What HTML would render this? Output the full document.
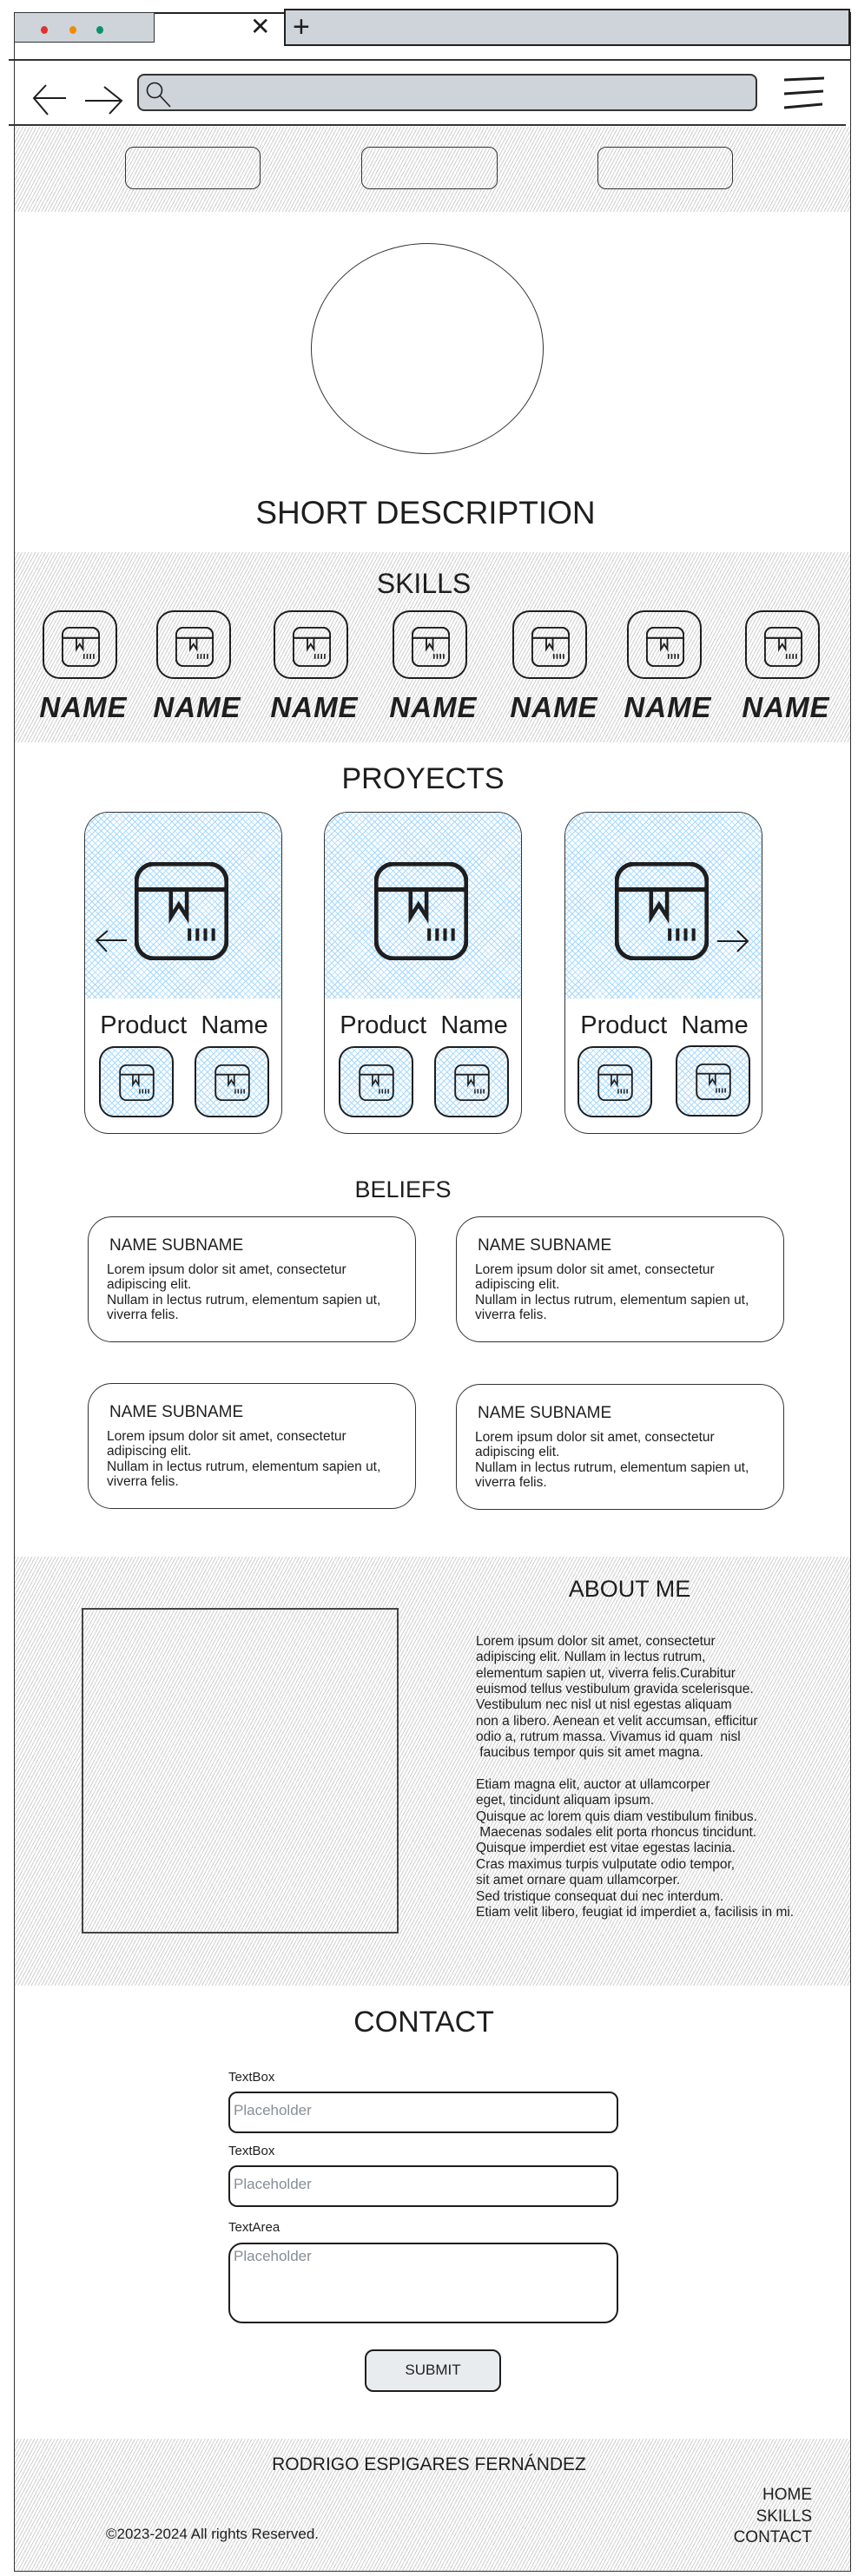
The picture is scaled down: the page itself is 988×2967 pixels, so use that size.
<!DOCTYPE html>
<html><head><meta charset="utf-8"><style>
*{margin:0;padding:0;box-sizing:border-box}
body{width:988px;height:2967px;position:relative;background:#fff;font-family:"Liberation Sans",sans-serif;color:#1e1e1e;overflow:hidden}
.a{position:absolute}
.hatch{background:repeating-linear-gradient(-62deg,#fff 0 2.4px,#cfcfcf 2.4px 3.4px)}
.blue{background:repeating-linear-gradient(45deg,transparent 0 4px,#a5d8ff 4px 5px),repeating-linear-gradient(-45deg,#fff 0 4px,#a5d8ff 4px 5px)}
.hand{font-family:"Liberation Sans Narrow","Liberation Sans",sans-serif;text-align:center;white-space:nowrap}
.skill{width:86px;height:79px;border:2.5px solid #1e1e1e;border-radius:20px}
.skill svg{position:absolute;left:20px;top:17px}
.nm{width:110px;font-size:33px;font-style:italic;font-weight:bold;letter-spacing:1px}
.card{width:228px;height:371px;border:1.5px solid #333;border-radius:28px;overflow:hidden}
.thumb{width:86px;height:82px;border:2.5px solid #1e1e1e;border-radius:18px}
.thumb svg{position:absolute;left:21px;top:19px}
.bel{width:378px;height:145px;border:1.5px solid #333;border-radius:28px}
.bel h3{position:absolute;left:24px;top:22px;font-size:19px;font-weight:normal}
.bel p{position:absolute;left:21px;top:52px;font-size:15.5px;line-height:17.3px}
.inp{left:263px;width:449px;height:48px;border:2.5px solid #1e1e1e;border-radius:10px;font-size:17px;color:#868e96;padding:10px 4px;font-family:"Liberation Sans Narrow","Liberation Sans",sans-serif}
.lbl{left:263px;font-size:15px;font-family:"Liberation Sans Narrow","Liberation Sans",sans-serif}
</style></head><body>
<svg width="0" height="0" style="position:absolute"><defs>
<g id="box"><rect x="2" y="2" width="102" height="107" rx="20" fill="none" stroke="#1e1e1e" stroke-width="5"/><line x1="2" y1="31" x2="104" y2="31" stroke="#1e1e1e" stroke-width="5"/><path d="M41 31V62L50 48L59 62V31" fill="none" stroke="#1e1e1e" stroke-width="4.5"/><path d="M62 75V89M71 75V89M80 75V89M89 75V89" stroke="#1e1e1e" stroke-width="4"/></g>
</defs></svg>

<!-- browser chrome -->
<div class="a" style="left:16px;top:14px;width:964px;height:2948px;border:1.5px solid #333;border-top:2px solid #222"></div>
<div class="a" style="left:16px;top:14px;width:162px;height:35px;background:#ced4da;border:1.5px solid #333"></div>
<div class="a" style="left:47px;top:30px;width:8px;height:9px;border-radius:50%;background:#e03131"></div>
<div class="a" style="left:80px;top:30px;width:8px;height:9px;border-radius:50%;background:#f08c00"></div>
<div class="a" style="left:111px;top:30px;width:8px;height:9px;border-radius:50%;background:#099268"></div>
<div class="a" style="left:288px;top:14px;font-size:28px;line-height:34px">✕</div>
<div class="a" style="left:327px;top:10px;width:652px;height:43px;background:#ced4da;border:2px solid #222"></div>
<div class="a" style="left:337px;top:10px;font-size:34px;line-height:42px;font-weight:lighter">+</div>
<div class="a" style="left:10px;top:68px;width:970px;height:2px;background:#333"></div>
<div class="a" style="left:10px;top:143px;width:964px;height:2px;background:#333"></div>
<svg class="a" style="left:36px;top:96px" width="110" height="40"><path d="M40 17H4M17 2L3 17L19 36" fill="none" stroke="#1e1e1e" stroke-width="2"/><path d="M62 20H104M84 4L104 20L90 35" fill="none" stroke="#1e1e1e" stroke-width="2"/></svg>
<div class="a" style="left:158px;top:85px;width:714px;height:43px;background:#ced4da;border:2px solid #333;border-radius:8px"></div>
<svg class="a" style="left:166px;top:93px" width="36" height="32"><circle cx="12" cy="11" r="8.5" fill="none" stroke="#1e1e1e" stroke-width="1.6"/><path d="M18 17L30 30" stroke="#1e1e1e" stroke-width="1.6"/></svg>
<svg class="a" style="left:900px;top:86px" width="54" height="42"><path d="M3 6L49 4M3 22L48 19M3 38L47 34" stroke="#1e1e1e" stroke-width="3"/></svg>

<!-- nav -->
<div class="a hatch" style="left:17px;top:146px;width:962px;height:98px"></div>
<div class="a" style="left:144px;top:169px;width:156px;height:49px;border:1.5px solid #333;border-radius:10px"></div>
<div class="a" style="left:416px;top:169px;width:157px;height:49px;border:1.5px solid #333;border-radius:10px"></div>
<div class="a" style="left:688px;top:169px;width:156px;height:49px;border:1.5px solid #333;border-radius:10px"></div>

<!-- hero -->
<div class="a" style="left:358px;top:280px;width:268px;height:243px;border:1.2px solid #333;border-radius:50%"></div>
<div class="a hand" style="left:240px;top:568px;width:500px;font-size:37px;line-height:46px">SHORT DESCRIPTION</div>

<!-- skills -->
<div class="a hatch" style="left:17px;top:636px;width:962px;height:219px"></div>
<div class="a hand" style="left:388px;top:652px;width:200px;font-size:32px;line-height:40px">SKILLS</div>
<div class="a skill" style="left:49px;top:703px"><svg width="44" height="46" viewBox="0 0 106 111"><use href="#box"/></svg></div>
<div class="a skill" style="left:180px;top:703px"><svg width="44" height="46" viewBox="0 0 106 111"><use href="#box"/></svg></div>
<div class="a skill" style="left:315px;top:703px"><svg width="44" height="46" viewBox="0 0 106 111"><use href="#box"/></svg></div>
<div class="a skill" style="left:452px;top:703px"><svg width="44" height="46" viewBox="0 0 106 111"><use href="#box"/></svg></div>
<div class="a skill" style="left:590px;top:703px"><svg width="44" height="46" viewBox="0 0 106 111"><use href="#box"/></svg></div>
<div class="a skill" style="left:722px;top:703px"><svg width="44" height="46" viewBox="0 0 106 111"><use href="#box"/></svg></div>
<div class="a skill" style="left:858px;top:703px"><svg width="44" height="46" viewBox="0 0 106 111"><use href="#box"/></svg></div>
<div class="a hand nm" style="left:41px;top:796px">NAME</div>
<div class="a hand nm" style="left:172px;top:796px">NAME</div>
<div class="a hand nm" style="left:307px;top:796px">NAME</div>
<div class="a hand nm" style="left:444px;top:796px">NAME</div>
<div class="a hand nm" style="left:583px;top:796px">NAME</div>
<div class="a hand nm" style="left:714px;top:796px">NAME</div>
<div class="a hand nm" style="left:850px;top:796px">NAME</div>

<!-- projects -->
<div class="a hand" style="left:337px;top:875px;width:300px;font-size:34px;line-height:44px">PROYECTS</div>

<div class="a card" style="left:97px;top:935px"><div class="a blue" style="left:0;top:0;width:228px;height:214px"></div>
<svg class="a" style="left:57px;top:57px" width="108" height="113" viewBox="0 0 106 111"><use href="#box"/></svg>
<svg class="a" style="left:10px;top:133px" width="42" height="30"><path d="M38 14H3M16 3L3 14L15 27" fill="none" stroke="#1e1e1e" stroke-width="2"/></svg>
<div class="a hand" style="left:0;top:228px;width:228px;font-size:29px;line-height:34px">Product&nbsp; Name</div>
<div class="a thumb blue" style="left:16px;top:269px"><svg width="41" height="42" viewBox="0 0 106 111"><use href="#box"/></svg></div>
<div class="a thumb blue" style="left:126px;top:269px"><svg width="41" height="42" viewBox="0 0 106 111"><use href="#box"/></svg></div></div>

<div class="a card" style="left:373px;top:935px"><div class="a blue" style="left:0;top:0;width:228px;height:214px"></div>
<svg class="a" style="left:57px;top:57px" width="108" height="113" viewBox="0 0 106 111"><use href="#box"/></svg>
<div class="a hand" style="left:0;top:228px;width:228px;font-size:29px;line-height:34px">Product&nbsp; Name</div>
<div class="a thumb blue" style="left:16px;top:269px"><svg width="41" height="42" viewBox="0 0 106 111"><use href="#box"/></svg></div>
<div class="a thumb blue" style="left:126px;top:269px"><svg width="41" height="42" viewBox="0 0 106 111"><use href="#box"/></svg></div></div>

<div class="a card" style="left:650px;top:935px"><div class="a blue" style="left:0;top:0;width:228px;height:214px"></div>
<svg class="a" style="left:57px;top:57px" width="108" height="113" viewBox="0 0 106 111"><use href="#box"/></svg>
<svg class="a" style="left:172px;top:133px" width="42" height="30"><path d="M3 15H38M26 3L38 15L26 27" fill="none" stroke="#1e1e1e" stroke-width="2"/></svg>
<div class="a hand" style="left:0;top:228px;width:228px;font-size:29px;line-height:34px">Product&nbsp; Name</div>
<div class="a thumb blue" style="left:14px;top:269px"><svg width="41" height="42" viewBox="0 0 106 111"><use href="#box"/></svg></div>
<div class="a thumb blue" style="left:127px;top:268px"><svg width="41" height="42" viewBox="0 0 106 111"><use href="#box"/></svg></div></div>

<!-- beliefs -->
<div class="a" style="left:364px;top:1354px;width:200px;text-align:center;font-size:27px;line-height:32px">BELIEFS</div>
<div class="a bel" style="left:101px;top:1401px"><h3>NAME SUBNAME</h3><p>Lorem ipsum dolor sit amet, consectetur<br>adipiscing elit.<br>Nullam in lectus rutrum, elementum sapien ut,<br>viverra felis.</p></div>
<div class="a bel" style="left:525px;top:1401px"><h3>NAME SUBNAME</h3><p>Lorem ipsum dolor sit amet, consectetur<br>adipiscing elit.<br>Nullam in lectus rutrum, elementum sapien ut,<br>viverra felis.</p></div>
<div class="a bel" style="left:101px;top:1593px"><h3>NAME SUBNAME</h3><p>Lorem ipsum dolor sit amet, consectetur<br>adipiscing elit.<br>Nullam in lectus rutrum, elementum sapien ut,<br>viverra felis.</p></div>
<div class="a bel" style="left:525px;top:1594px"><h3>NAME SUBNAME</h3><p>Lorem ipsum dolor sit amet, consectetur<br>adipiscing elit.<br>Nullam in lectus rutrum, elementum sapien ut,<br>viverra felis.</p></div>

<!-- about -->
<div class="a hatch" style="left:17px;top:1793px;width:962px;height:494px"></div>
<div class="a" style="left:625px;top:1814px;width:200px;text-align:center;font-size:27px;line-height:32px">ABOUT ME</div>
<div class="a" style="left:94px;top:1852px;width:365px;height:375px;border:2px solid #444"></div>
<div class="a" style="left:548px;top:1882px;font-size:15.5px;line-height:18.35px;white-space:pre">Lorem ipsum dolor sit amet, consectetur
adipiscing elit. Nullam in lectus rutrum,
elementum sapien ut, viverra felis.Curabitur
euismod tellus vestibulum gravida scelerisque.
Vestibulum nec nisl ut nisl egestas aliquam
non a libero. Aenean et velit accumsan, efficitur
odio a, rutrum massa. Vivamus id quam  nisl
 faucibus tempor quis sit amet magna.

Etiam magna elit, auctor at ullamcorper
eget, tincidunt aliquam ipsum.
Quisque ac lorem quis diam vestibulum finibus.
 Maecenas sodales elit porta rhoncus tincidunt.
Quisque imperdiet est vitae egestas lacinia.
Cras maximus turpis vulputate odio tempor,
sit amet ornare quam ullamcorper.
Sed tristique consequat dui nec interdum.
Etiam velit libero, feugiat id imperdiet a, facilisis in mi.</div>

<!-- contact -->
<div class="a hand" style="left:338px;top:2309px;width:300px;font-size:34px;line-height:40px">CONTACT</div>
<div class="a lbl" style="top:2384px">TextBox</div>
<div class="a inp" style="top:2409px">Placeholder</div>
<div class="a lbl" style="top:2469px">TextBox</div>
<div class="a inp" style="top:2494px">Placeholder</div>
<div class="a lbl" style="top:2557px">TextArea</div>
<div class="a inp" style="top:2583px;height:93px;border-radius:16px;padding-top:4px">Placeholder</div>
<div class="a hand" style="left:420px;top:2706px;width:157px;height:49px;background:#e9ecef;border:2.5px solid #1e1e1e;border-radius:10px;font-size:17px;line-height:44px">SUBMIT</div>

<!-- footer -->
<div class="a hatch" style="left:17px;top:2809px;width:962px;height:152px"></div>
<div class="a hand" style="left:294px;top:2826px;width:400px;font-size:21px;line-height:26px">RODRIGO ESPIGARES FERNÁNDEZ</div>
<div class="a hand" style="left:122px;top:2908px;font-size:17px;line-height:22px;text-align:left">©2023-2024 All rights Reserved.</div>
<div class="a hand" style="left:800px;top:2862px;width:135px;text-align:right;font-size:19px;line-height:24.5px">HOME<br>SKILLS<br>CONTACT</div>
</body></html>
